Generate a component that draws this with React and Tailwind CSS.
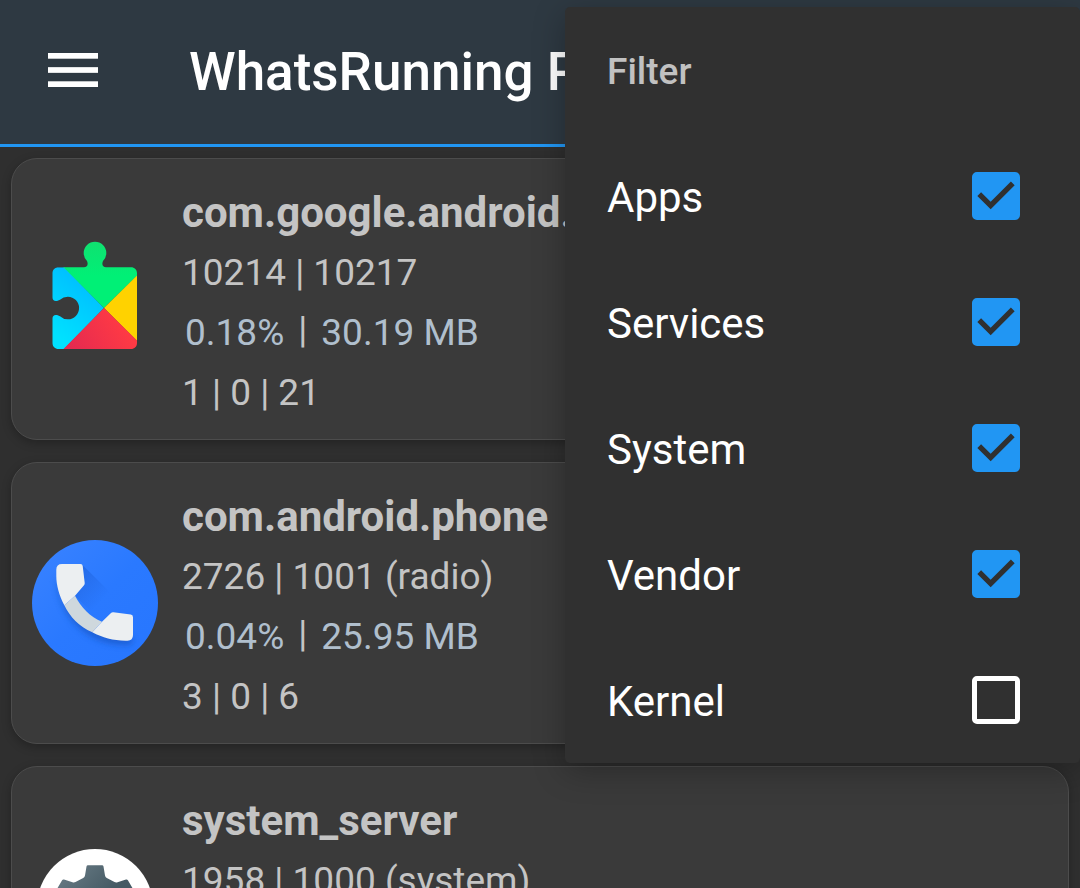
import React, { useState } from "react";

function PlayServicesIcon() {
  return (
    <svg viewBox="0 0 126 126" className="size-[126px] shrink-0" aria-hidden="true">
      <defs>
        <clipPath id="puzzle">
          <path d="M26.5 31.3H52C55.100 31.300 56.600 28.600 55 25A11.300 11.300 0 1 1 71 25C69.400 28.600 70.900 31.300 74 31.300H99C102.500 31.300 105 33.800 105 37.300V107C105 110.500 102.500 113 99 113H26.500C23 113 20.500 110.500 20.500 107V82.500C20.500 79 23.500 77.800 28 80.200A11.300 11.300 0 1 0 28 63.800C23.500 66.200 20.500 65 20.500 61.500V37.300C20.500 33.800 23 31.300 26.500 31.300Z" />
        </clipPath>
        <linearGradient id="puzzleBlue" gradientUnits="userSpaceOnUse" x1="56" y1="46" x2="20" y2="96">
          <stop offset="0" stopColor="#00bfff" />
          <stop offset="1" stopColor="#00e1ff" />
        </linearGradient>
        <linearGradient id="puzzleRed" gradientUnits="userSpaceOnUse" x1="90" y1="85" x2="40" y2="115">
          <stop offset="0" stopColor="#ff3a44" />
          <stop offset="1" stopColor="#e52a50" />
        </linearGradient>
        <linearGradient id="puzzleGreen" gradientUnits="userSpaceOnUse" x1="63" y1="5" x2="63" y2="40">
          <stop offset="0" stopColor="#10e070" />
          <stop offset="1" stopColor="#00f076" />
        </linearGradient>
      </defs>
      <g clipPath="url(#puzzle)">
        <path d="M72 72L32.300 31.300H0V126H19.500Z" fill="url(#puzzleBlue)" />
        <path d="M72 72L31.500 31.300V0H110V35Z" fill="url(#puzzleGreen)" />
        <path d="M72 72L110 34.500V110Z" fill="#ffd200" />
        <path d="M72 72L31.500 113V120H110V109.500Z" fill="url(#puzzleRed)" />
      </g>
    </svg>
  );
}

function PhoneIcon() {
  return (
    <svg viewBox="0 0 126 126" className="size-[126px] shrink-0" aria-hidden="true">
      <defs>
        <linearGradient id="phoneBg" x1="0" y1="0" x2="1" y2="1">
          <stop offset="0" stopColor="#3a83ff" />
          <stop offset="0.5" stopColor="#2a79ff" />
          <stop offset="1" stopColor="#2776ff" />
        </linearGradient>
        <linearGradient id="phoneShade" gradientUnits="userSpaceOnUse" x1="50" y1="34" x2="74" y2="56">
          <stop offset="0" stopColor="#1c5ed6" stopOpacity="0.5" />
          <stop offset="1" stopColor="#1c5ed6" stopOpacity="0" />
        </linearGradient>
        <filter id="phoneBlur" x="-20%" y="-20%" width="140%" height="150%">
          <feGaussianBlur stdDeviation="3" />
        </filter>
      </defs>
      <circle cx="63" cy="63" r="63" fill="url(#phoneBg)" />
      <path d="M50.500 25L90 64L80 72L70 82L43 56L52.700 44Z" fill="url(#phoneShade)" />
      <path
        d="M24.300 36C24.300 70 50 106 96 105C99 105 101 103 101 98L60 88L32 62Z"
        fill="#174fb8"
        opacity="0.6"
        filter="url(#phoneBlur)"
      />
      <path d="M43 55.700C49 67 58 77 70 81.700L60.300 92.300C47 86.500 38 77 32.300 65.300Z" fill="#cfd8dd" />
      <path d="M30 24H48.500Q50.500 24 50.700 26L52.700 43Q52.800 44.300 52 45.200L43 55.700L32.300 65.300C27 55 24.300 45 24.300 36V29.700Q24.300 24 30 24Z" fill="#eceff1" />
      <path d="M79 73Q80 72 81.400 72.200L98.700 74.600Q101 74.900 101 77.200V95Q101 100.700 95.500 100.700C82 101 71 98 60.300 92.300L70 81.700Z" fill="#eceff1" />
    </svg>
  );
}

function SystemIcon() {
  return (
    <svg viewBox="0 0 126 126" className="size-[126px] shrink-0" aria-hidden="true">
      <defs>
        <linearGradient id="gearFill" gradientUnits="userSpaceOnUse" x1="25" y1="25" x2="101" y2="101">
          <stop offset="0" stopColor="#6b7d87" />
          <stop offset="0.500" stopColor="#455a64" />
        </linearGradient>
      </defs>
      <circle cx="63" cy="63" r="58" fill="#ffffff" />
      <path
        fill="url(#gearFill)"
        fillRule="evenodd"
        d="M56 21.300H70Q71.300 21.300 71.500 22.600L73 31.500Q73.300 33.200 74.800 34L82.500 38Q84 38.800 85.500 38.200L94 35.500Q95.200 35.100 95.900 36.300L103 48.300Q103.700 49.500 102.700 50.400L95.700 56.200Q94.500 57.200 94.500 58.700V67.300Q94.500 68.800 95.700 69.800L102.700 75.600Q103.700 76.500 103 77.700L95.900 89.700Q95.200 90.900 94 90.500L85.500 87.800Q84 87.200 82.500 88L74.800 92Q73.300 92.800 73 94.500L71.500 103.400Q71.300 104.700 70 104.700H56Q54.700 104.700 54.500 103.400L53 94.500Q52.700 92.800 51.200 92L43.500 88Q42 87.200 40.500 87.800L32 90.500Q30.800 90.900 30.100 89.700L23 77.700Q22.300 76.500 23.300 75.600L30.300 69.800Q31.500 68.800 31.500 67.300V58.700Q31.500 57.200 30.300 56.200L23.300 50.400Q22.300 49.500 23 48.300L30.100 36.300Q30.800 35.100 32 35.500L40.500 38.200Q42 38.800 43.500 38L51.200 34Q52.700 33.200 53 31.500L54.500 22.600Q54.700 21.300 56 21.300ZM63 49A14 14 0 1 0 63 77A14 14 0 1 0 63 49Z"
      />
    </svg>
  );
}

const processes = [
  { name: "com.google.android.gms", ids: "10214 | 10217", cpu: "0.18%", mem: "30.19 MB", counts: "1 | 0 | 21", Icon: PlayServicesIcon },
  { name: "com.android.phone", ids: "2726 | 1001 (radio)", cpu: "0.04%", mem: "25.95 MB", counts: "3 | 0 | 6", Icon: PhoneIcon },
  { name: "system_server", ids: "1958 | 1000 (system)", cpu: "0.02%", mem: "84.20 MB", counts: "2 | 0 | 9", Icon: SystemIcon },
];

function ProcessCard({ name, ids, cpu, mem, counts, Icon }) {
  return (
    <li className="flex items-center gap-6 rounded-[26px] border border-[#4c4c4c] bg-[#3a3a3a] px-5 shadow-[0_3px_10px_rgba(0,0,0,0.25)]">
      <Icon />
      <div className="min-w-0 flex-1 pt-6 pb-4 text-[37px] leading-[60px] text-[#c4c4c4]">
        <h2 className="truncate text-[42px] leading-[60px] font-bold">{name}</h2>
        <p>{ids}</p>
        <p className="flex pl-[3px] text-[#b0bfcd]">
          <span>{cpu}</span>
          <span className="px-[14px] leading-[54px] text-[#c4c4c4]">|</span>
          <span>{mem}</span>
        </p>
        <p>{counts}</p>
      </div>
    </li>
  );
}

function FilterOption({ label, checked, onChange }) {
  return (
    <label className="flex h-[126px] items-center justify-between pr-[60px] pl-[42px] text-[42px] text-white">
      <span className="pt-[2px]">{label}</span>
      <span className="relative flex size-12">
        <input
          type="checkbox"
          checked={checked}
          onChange={onChange}
          className="size-12 appearance-none rounded-[5px] border-[5px] border-white checked:border-[#2196f3] checked:bg-[#2196f3]"
        />
        {checked && (
          <svg viewBox="3 3 18 18" className="pointer-events-none absolute inset-0 size-12" aria-hidden="true">
            <path d="M10 17L5 12L6.410 10.590L10 14.170L17.590 6.580L19 8Z" fill="#303030" />
          </svg>
        )}
      </span>
    </label>
  );
}

export default function App() {
  const [filters, setFilters] = useState({ Apps: true, Services: true, System: true, Vendor: true, Kernel: false });

  return (
    <div className="relative h-screen overflow-hidden bg-[#2f2f2f] font-['Roboto',sans-serif]">
      <header className="flex h-[147px] items-center border-b-[3px] border-[#2196f3] bg-[#2e3942] pl-12">
        <button type="button" aria-label="Open menu" className="shrink-0 pb-1">
          <svg viewBox="0 0 50 34" className="h-[34px] w-[50px]" fill="#ffffff" aria-hidden="true">
            <rect y="0" width="50" height="5.700" />
            <rect y="14.150" width="50" height="5.700" />
            <rect y="28.300" width="50" height="5.700" />
          </svg>
        </button>
        <h1 className="truncate pt-[2px] pl-[91px] text-[53px] font-medium text-white">WhatsRunning Processes</h1>
      </header>

      <main className="p-[11px]">
        <ul className="flex flex-col gap-[22px]">
          {processes.map((process) => (
            <ProcessCard key={process.name} {...process} />
          ))}
        </ul>
      </main>

      <div
        role="group"
        aria-labelledby="filter-heading"
        className="absolute top-[7px] right-0 w-[515px] rounded-[5px] bg-[#303030] shadow-[0_8px_32px_rgba(0,0,0,0.27)]"
      >
        <h2 id="filter-heading" className="flex h-[126px] items-center pt-1 pl-[42px] text-[37px] font-medium text-[#c1c1c1]">
          Filter
        </h2>
        {Object.entries(filters).map(([label, checked]) => (
          <FilterOption
            key={label}
            label={label}
            checked={checked}
            onChange={() => setFilters({ ...filters, [label]: !checked })}
          />
        ))}
      </div>
    </div>
  );
}
